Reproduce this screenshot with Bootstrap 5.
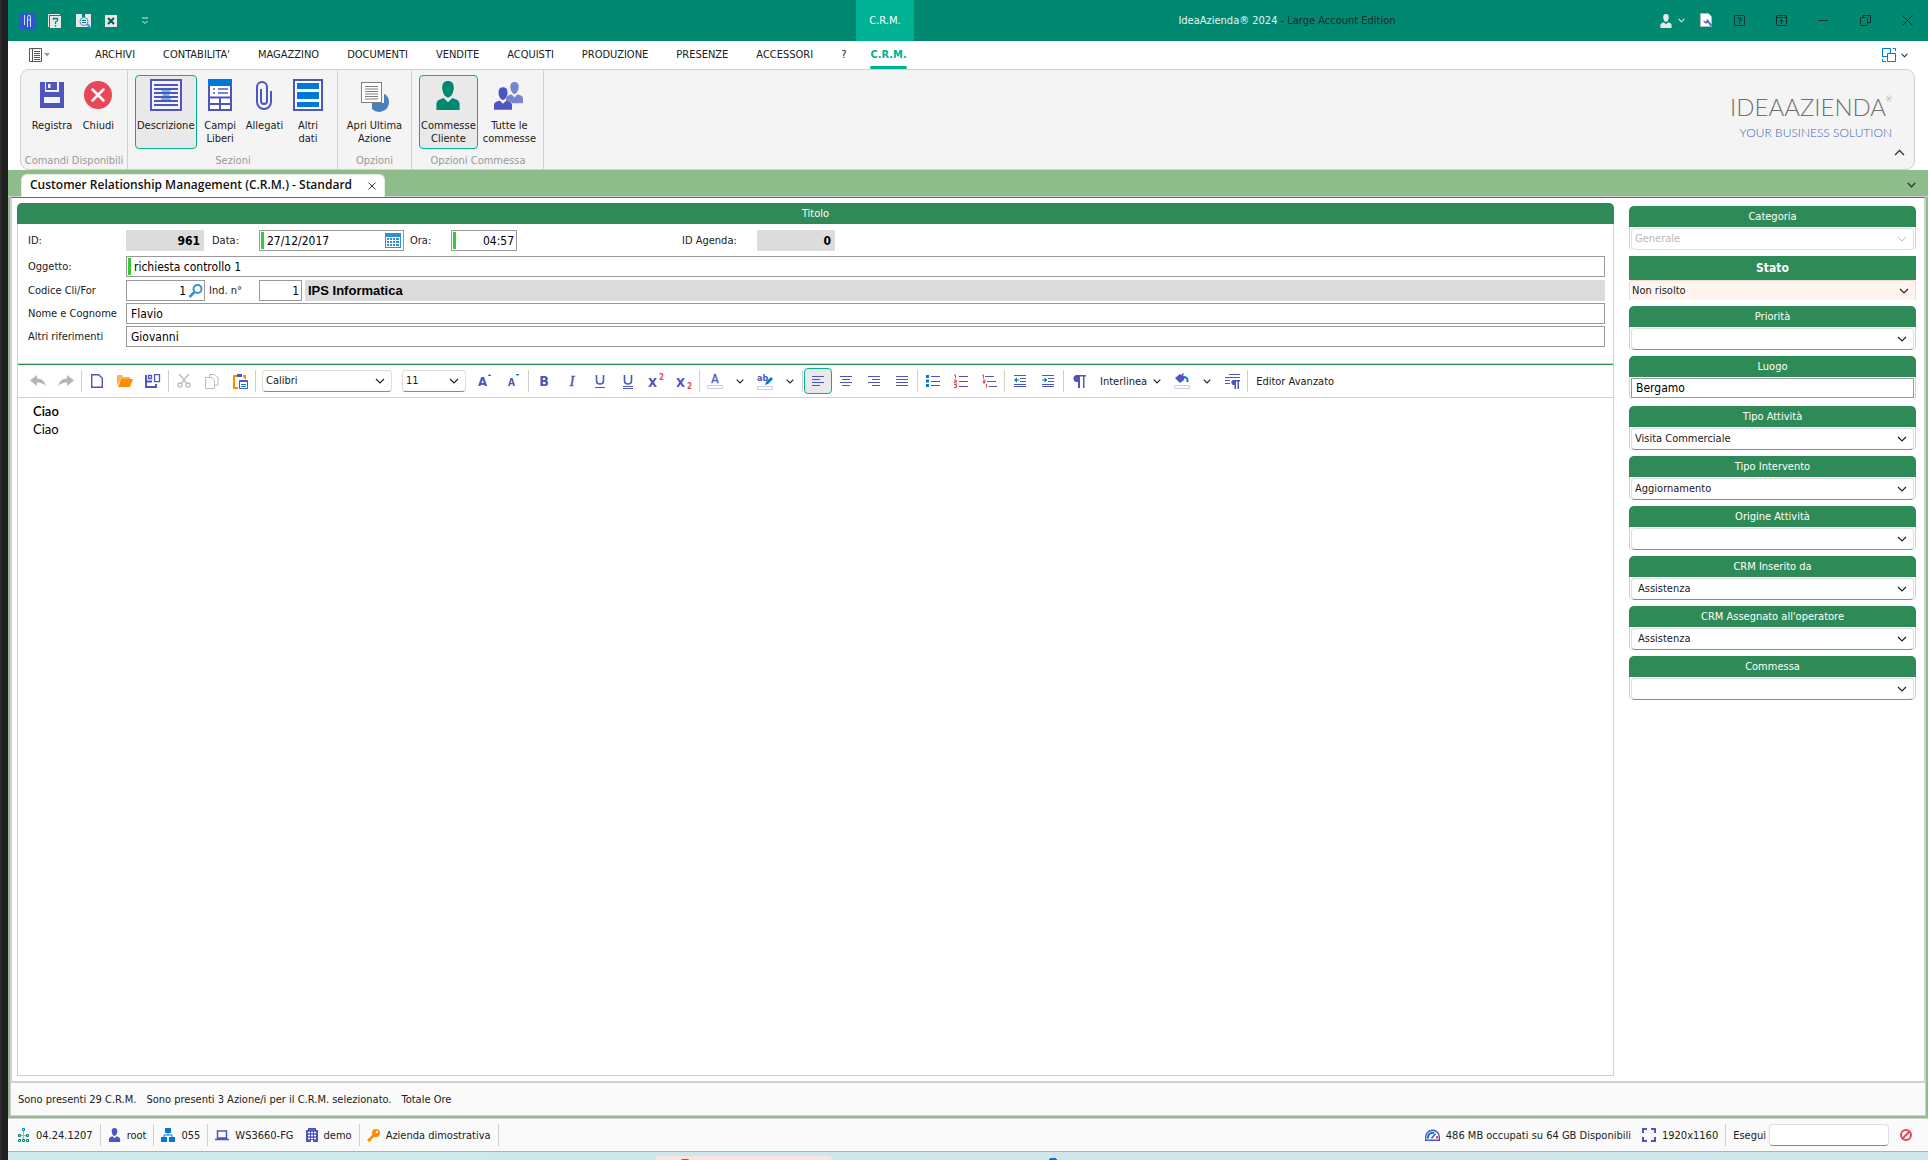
<!DOCTYPE html>
<html lang="it">
<head>
<meta charset="utf-8">
<meta name="viewport" content="width=device-width, initial-scale=1">
<title>IdeaAzienda 2024 - C.R.M.</title>
<link href="https://cdn.jsdelivr.net/npm/bootstrap@5.3.0/dist/css/bootstrap.min.css" rel="stylesheet">
<style>
:root{--teal:#008871;--teal-light:#00b294;--sea:#2e8b57;--sage:#8fbc8b;--line:#d0d0d0;--indigo:#4c55c0;--sky:#0078d7;--rose:#e84855}
body{font-family:"DejaVu Sans Condensed","DejaVu Sans",sans-serif;font-size:11px;line-height:13px;color:#202020;background:#1f1f1f}
button,input,select{font-family:inherit}
a{color:inherit;text-decoration:none}
.desk{min-height:100vh;padding-left:8px;background:linear-gradient(90deg,#2b2b2b 0 2px,#1f1f1f 2px 8px)}
.app-title{background:var(--teal);height:41px;color:#e6f5f2}
.quick{width:848px;padding-left:12px}
.ctx-tab{width:58px;background:var(--teal-light);color:#fff;padding-bottom:1px}
.cap-btn{border:0;background:none;padding:0;height:41px;width:42px;color:#1d2b28}
.bare{border:0;background:none;padding:0;color:inherit;line-height:inherit}
.app-menu{height:28px;background:#fff;padding:0 20px 0 21px}
.app-menu nav a{line-height:28px;position:relative}
.app-menu nav{gap:28px;margin-left:45px}
.app-menu nav a.current{color:var(--teal-light);font-weight:700;margin-left:-4px}
.app-menu nav a.current::after{content:"";position:absolute;left:0;right:0;bottom:0;height:3px;background:var(--teal-light);border-radius:2px}
.ribbon-wrap{background:#fff;padding:0 13px 0 12px}
.ribbon{height:101px;background:#f4f4f4;border:1px solid var(--line);border-radius:9px}
.rgroup{border-right:1px solid var(--line);padding:5px 6px 2px 7px}
.rgroup.narrow{padding-left:2px;padding-right:2px}
.rgroup .caption-text{color:#999;text-align:center;white-space:nowrap}
.rbtn{border:1px solid transparent;border-radius:4px;background:none;padding:3px 1px 0;height:74px;color:#202020;display:flex;flex-direction:column;align-items:center;text-align:center;line-height:13px}
.rbtn svg{margin-bottom:8px}
.rbtn.on{background:#e9e9e9;border-color:var(--teal-light)}
.brand-box{padding:20px 21px 0 0;font-family:Lato,sans-serif;font-weight:300}
.brand-top{font-size:24px;line-height:34px;color:#707070}
.brand-top sup{font-size:7px;top:-14px}
.brand-sub{font-size:12px;line-height:18px;color:#3f64b0}
.tabstrip{background:var(--sage);height:27px;padding:4px 12px 0 13px;border-bottom:1px solid var(--line)}
.doctab{background:#fff;border:1px solid #e4ece3;border-bottom:0;border-radius:6px 6px 0 0;height:23px;padding:0 8px;font-family:"Open Sans","Noto Sans",sans-serif;font-weight:600;font-size:12px;color:#111}
.doctab span{padding-bottom:2px}
.frame-outer{border:2px solid var(--sage);border-top:0;background:#fafafa}
.frame-in{border:2px solid var(--line);border-top:1px solid var(--sea);background:#fff;padding:5px 8px 5px 5px;gap:15px}
.main-col{border:1px solid var(--line);border-top:0;border-radius:6px 6px 0 0}
.bar-head{background:var(--sea);color:#fff;text-align:center;height:21px;line-height:21px;border-radius:5px 5px 0 0}
.fields{padding:6px 8px 16px 10px;border-bottom:1px solid var(--line);gap:2px}
.fields .frow{height:21px}
.fields .frow.first{margin-bottom:3px}
.fields .frow.subject{margin-bottom:1px}
.flab{width:98px}
.tbox{height:21px;border:1px solid #999;border-radius:0;background:#fff;color:#000;padding:0 4px;font-size:12px}
.ro{background:#dcdcdc;border:0;font-weight:700}
.firm{font-family:"Liberation Sans",sans-serif;font-size:13px;padding-left:3px}
.dirty{background:linear-gradient(#32cd32,#32cd32) 1px 1px/3px 17px no-repeat #fff;padding-left:7px}
.etool{border-top:1px solid var(--sea);border-bottom:1px solid var(--line);height:34px;padding-left:6px}
.ebtn{border:1px solid transparent;border-radius:4px;background:none;width:28px;height:26px;padding:0;display:flex;align-items:center;justify-content:center;color:#202020}
.ebtn.drop{width:22px}
.ebtn.wide{width:auto;padding:0 6px;font-size:11px}
.ebtn.on{border-color:var(--teal-light);background:#e9e9e9}
.sep{width:1px;height:22px;background:var(--line);margin:0 1px}
.pick{appearance:none;height:22px;border:1px solid #dedede;border-bottom-color:#8a8a8a;border-radius:4px;font-size:11px;line-height:20px;padding:0 24px 0 3px;color:#202020;background:#fff url("data:image/svg+xml,%3csvg xmlns='http://www.w3.org/2000/svg' viewBox='0 0 10 6'%3e%3cpath fill='none' stroke='%23222' stroke-width='1.200' d='m1 1 4 4 4-4'/%3e%3c/svg%3e") no-repeat right 6px center/10px 6px}
.pick:disabled{color:#b9b9b9;border-bottom-color:#dedede;background-color:#fff;opacity:1;background-image:url("data:image/svg+xml,%3csvg xmlns='http://www.w3.org/2000/svg' viewBox='0 0 10 6'%3e%3cpath fill='none' stroke='%23bbb' d='m1 1 4 4 4-4'/%3e%3c/svg%3e")}
.pick.alert-pick{background-color:#fff4ee;border-color:#f1d9d2;border-bottom:0;border-radius:3px 3px 0 0;height:20px;padding-left:2px}
.memo{color:#000;font-size:13px;line-height:18px;padding:4px 15px;font-family:Lato,sans-serif}
.side{width:287px;padding-top:3px;gap:6px}
.sbox{height:44px}
.sbody{border:1px solid var(--line);border-top:0;border-bottom:0;border-radius:0 0 4px 4px;height:23px;padding:1px 1px 0}
.sbody .tbox{height:20px}
.sbody .pick.indent{padding-left:6px}
.stato .bar-head{height:24px;line-height:24px;border-radius:0;font-weight:700;font-size:12px}
.notes{height:33px;padding:0 7px;border:1px solid var(--line);border-top:0;gap:10px}
.status{height:34px;background:#fafafa;border-top:1px solid var(--line);border-bottom:1px solid #a3b5b8;padding:0 16px 0 10px}
.status .sep{margin:0 7px}
.status .cell{display:flex;align-items:center;gap:6px}
.status .pick{background:#fff;width:120px;padding:0 4px}
.task{height:8px;background:linear-gradient(90deg,#cfe9ec,#cde8ea 35%,#d3e5ea 55%,#cfe6ec)}
.task-app{width:176px;height:4px;margin-left:648px;background:#fde2e2;border-radius:4px 4px 0 0}
svg{display:block;flex:none;overflow:visible}
</style>
<script src="https://cdn.jsdelivr.net/npm/bootstrap@5.3.0/dist/js/bootstrap.bundle.min.js" defer></script>
</head>
<body>
<svg width="0" height="0" class="position-absolute">
<symbol id="chev" viewBox="0 0 8 5"><path d="M.7.7 4 4 7.300.7" fill="none" stroke="currentColor" stroke-width="1.200"/></symbol>
<symbol id="person" viewBox="0 0 24 30"><path d="M12 0c4 0 6 2.500 6 7 0 5-3 10-6 10S6 12 6 7c0-4.500 2-7 6-7zM7.500 17.500 12 22l4.500-4.500C20 19 24 19.500 24 24v6H0v-6c0-4.500 4-5 7.500-6.500z" fill="currentColor"/></symbol>
<symbol id="lines" viewBox="0 0 12 11"><path d="M0 .5h12M0 3.500h12M0 6.500h12M0 9.500h12" stroke="#4c55c0" fill="none"/></symbol>
</svg>
<div class="desk d-flex flex-column">

<header class="app-title d-flex align-items-stretch">
  <div class="quick d-flex align-items-center">
    <svg width="16" height="16"><path fill="#2f55d4" d="M0 0h16v16H0z"/><path d="M4.500 2v10M7.500 14V5q0-3 1.500-3t1.500 3v9M7.500 7h3" stroke="#cfe0ff" fill="none"/></svg>
    <button class="bare" aria-label="Guida" style="margin-left:12px"><svg width="14" height="14"><path d="M.5 13V.5H12" stroke="#e8e8e8" fill="none"/><path fill="#e8e8e8" d="M2 2h11v12H2z"/><path d="M5.500 6V4.500h4v2L7.500 8v2M7.500 11v1.500" stroke="#008871" stroke-width="1.300" fill="none"/></svg></button>
    <button class="bare" aria-label="Cerca" style="margin-left:14px"><svg width="16" height="15"><path fill="#e8e8e8" d="M0 1h6v3h3V1h6v13H0z"/><path d="M7 0h2v3H7z" fill="#008871"/><circle cx="8" cy="8.500" r="4" fill="#dfeaf5" stroke="#5a8fc5"/><path d="M6 7.500h4M6 9.500h4" stroke="#008871"/><path d="m11 11 4 4" stroke="#5a8fc5" stroke-width="2"/></svg></button>
    <button class="bare" aria-label="Excel" style="margin-left:13px"><svg width="12" height="12"><path fill="#e8e8e8" d="M0 0h12v12H0z"/><path d="m3 3 6 6M9 3 3 9" stroke="#0a5c4c" stroke-width="2"/></svg></button>
    <button class="bare" aria-label="Personalizza" style="margin-left:24px"><svg width="8" height="8"><path d="M1 1h6M1.500 4 4 6.500 6.500 4" stroke="#e8e8e8" fill="none"/></svg></button>
  </div>
  <div class="ctx-tab d-flex align-items-center justify-content-center">C.R.M.</div>
  <div class="flex-grow-1 d-flex align-items-center justify-content-center"><span>IdeaAzienda® 2024 <span style="color:#1d2b28">- Large Account Edition</span></span></div>
  <div class="d-flex align-items-center">
    <button class="bare d-flex align-items-center" aria-label="Utente" style="gap:6px;margin-right:15px"><svg width="12" height="14" color="#e8e8e8"><use href="#person"/></svg><svg width="7" height="5" color="#e8e8e8"><use href="#chev"/></svg></button>
    <button class="bare" aria-label="Impostazioni" style="margin-right:6px"><svg width="12" height="15"><path fill="#fff" stroke="#b9b9b9" d="M.5.5h8l3 3v10H.500z"/><path d="m7 7 4.500 6" stroke="#3c78c8" stroke-width="2"/><path d="M3.500 7.500a2.500 2.500 0 1 0 4-1.500l-.5 2-2 .5z" fill="#3c78c8"/></svg></button>
    <button class="cap-btn d-flex align-items-center justify-content-center" aria-label="Aiuto"><svg width="11" height="11"><rect x=".5" y=".5" width="10" height="10" rx="1" fill="none" stroke="currentColor"/><path d="M4 4V3h3v2L5.500 6v1M5.500 8v1" stroke="currentColor" fill="none"/></svg></button>
    <button class="cap-btn d-flex align-items-center justify-content-center" aria-label="Blocca"><svg width="11" height="11"><rect x=".5" y=".5" width="10" height="10" rx="1" fill="none" stroke="currentColor"/><path d="M0 2.500h11M5.500 9V5M3.500 6.500l2-2 2 2" stroke="currentColor" fill="none"/></svg></button>
    <button class="cap-btn d-flex align-items-center justify-content-center" aria-label="Riduci"><svg width="10" height="11"><path d="M0 5.500h10" stroke="currentColor"/></svg></button>
    <button class="cap-btn d-flex align-items-center justify-content-center" aria-label="Ripristina"><svg width="11" height="11"><rect x=".5" y="2.500" width="7" height="8" rx="1" fill="none" stroke="currentColor"/><path d="M3 2V.5h7.500v7H8" stroke="currentColor" fill="none"/></svg></button>
    <button class="cap-btn d-flex align-items-center justify-content-center" aria-label="Chiudi finestra"><svg width="11" height="11"><path d="m.5.5 10 10M10.500.5l-10 10" stroke="currentColor"/></svg></button>
  </div>
</header>

<div class="app-menu d-flex align-items-center">
  <button class="bare d-flex align-items-center" aria-label="File" style="gap:2px"><svg width="13" height="14"><path d="M.5.5h12v13H.500zM3.500 1v13M5 3.500h6M5 5.500h6M5 7.500h6M5 9.500h6M5 11.500h6" stroke="#555" fill="none"/></svg><svg width="6" height="4"><path d="M0 0h6L3 3.500z" fill="#999"/></svg></button>
  <nav class="d-flex flex-grow-1">
    <a href="#">ARCHIVI</a><a href="#">CONTABILITA'</a><a href="#">MAGAZZINO</a><a href="#">DOCUMENTI</a><a href="#">VENDITE</a><a href="#">ACQUISTI</a><a href="#">PRODUZIONE</a><a href="#">PRESENZE</a><a href="#">ACCESSORI</a><a href="#">?</a><a href="#" class="current">C.R.M.</a>
  </nav>
  <button class="bare d-flex align-items-center" aria-label="Layout" style="gap:5px"><svg width="14" height="14"><path d="M4 8.500H.5v-8h8V5M11 .5h2.500V3M.5 11v2.500H4M5.500 5.500h8v8h-8zM0 8.500h5" stroke="#0078d7" fill="none"/></svg><svg width="7" height="5"><use href="#chev"/></svg></button>
</div>

<div class="ribbon-wrap">
<div class="ribbon d-flex">
  <section class="rgroup narrow d-flex flex-column justify-content-between" style="width:107px">
    <div class="d-flex justify-content-center" style="gap:6px;padding-right:2px">
      <button class="rbtn"><svg width="32" height="32"><path d="M4 3h5v10h14V3h5v26H4z" fill="#4c55c0"/><path d="M8 18h16v6H8z" fill="#f4f4f4"/><path d="M10 3h11v8H10z" fill="#4c55c0"/><path d="M12 5h2.500v4H12z" fill="#f4f4f4"/></svg>Registra</button>
      <button class="rbtn"><svg width="32" height="32"><circle cx="16" cy="16" r="14" fill="#e84855"/><path d="m10.500 10.500 11 11M21.500 10.500l-11 11" stroke="#fff" stroke-width="2.500" stroke-linecap="round"/></svg>Chiudi</button>
    </div>
    <div class="caption-text">Comandi Disponibili</div>
  </section>
  <section class="rgroup d-flex flex-column justify-content-between" style="width:210px">
    <div class="d-flex justify-content-between" style="padding-right:6px">
      <button class="rbtn on"><svg width="32" height="32"><rect x="1" y="1" width="30" height="30" fill="#f4f4f4" stroke="#4c55c0" stroke-width="2"/><path d="M10 9h12l-3 6 3 8H10l3-8z" fill="#74b3ea"/><path d="M4 6h24M4 10h24M4 14h24M4 18h24M4 22h24M4 26h24" stroke="#4c55c0" stroke-width="2"/></svg>Descrizione</button>
      <button class="rbtn"><svg width="24" height="32"><path d="M1 1h22v30H1z" fill="#fff" stroke="#4c55c0" stroke-width="2"/><path fill="#0078d7" d="M0 0h24v7H0z"/><path d="M5 10h2M10 10h10M5 14h2M10 14h10" stroke="#7a83d3" stroke-width="2"/><path d="M2 18.500h20M2 25h20M12 18v13" stroke="#4c55c0" stroke-width="2"/></svg>Campi<br>Liberi</button>
      <button class="rbtn"><svg width="16" height="32"><path d="M15 12v11a7 7 0 0 1-14 0V8a5 5 0 0 1 10 0v14a3 3 0 0 1-6 0V10" stroke="#4c55c0" stroke-width="2" fill="none"/></svg>Allegati</button>
      <button class="rbtn"><svg width="30" height="32"><rect x="1" y="1" width="28" height="30" fill="#fff" stroke="#4c55c0" stroke-width="2"/><path fill="#0078d7" d="M4 4h22v6H4zM4 13h22v7H4zM4 23h22v5H4z"/></svg>Altri<br>dati</button>
    </div>
    <div class="caption-text">Sezioni</div>
  </section>
  <section class="rgroup narrow d-flex flex-column justify-content-between" style="width:74px">
    <div class="d-flex justify-content-center">
      <button class="rbtn text-nowrap"><svg width="30" height="32"><path d="M12 30a10 10 0 0 0 17-7c0-4-2-7-5-8v9H12z" fill="#4a80bd"/><rect x="1.500" y="3.500" width="20" height="20" fill="#fff" stroke="#808080"/><path d="M5 7.500h13M5 10h13M5 12.500h13M5 15h13M5 17.500h13M5 20h13" stroke="#808080"/></svg>Apri Ultima<br>Azione</button>
    </div>
    <div class="caption-text">Opzioni</div>
  </section>
  <section class="rgroup d-flex flex-column justify-content-between" style="width:132px">
    <div class="d-flex" style="gap:3px">
      <button class="rbtn on"><svg width="32" height="32" color="#008871"><use href="#person" x="4" y="2" width="24" height="29"/></svg>Commesse<br>Cliente</button>
      <button class="rbtn text-nowrap"><svg width="32" height="32"><use href="#person" x="13" y="2" width="17" height="23" color="#7a83d3"/><use href="#person" x="0" y="7" width="20" height="25" color="#f4f4f4"/><use href="#person" x="1" y="8" width="18" height="23" color="#4c55c0"/></svg>Tutte le<br>commesse</button>
    </div>
    <div class="caption-text">Opzioni Commessa</div>
  </section>
  <div class="ms-auto d-flex">
    <div class="brand-box text-end"><div class="brand-top">IDEAAZIENDA<sup>®</sup></div><div class="brand-sub">YOUR BUSINESS SOLUTION</div></div>
  </div>
  <button class="bare align-self-end" aria-label="Comprimi barra" style="margin:0 9px 13px -19px"><svg width="11" height="7"><path d="m1 6 4.500-4.500L10 6" stroke="#333" stroke-width="1.300" fill="none"/></svg></button>
</div>
</div>

<div class="tabstrip d-flex align-items-center">
  <div class="doctab d-flex align-items-center gap-3"><span>Customer Relationship Management (C.R.M.) - Standard</span><button class="bare" aria-label="Chiudi scheda"><svg width="8" height="8"><path d="m.5.5 7 7M7.500.5l-7 7" stroke="#333"/></svg></button></div>
  <button class="bare ms-auto" aria-label="Elenco schede"><svg width="9" height="6" color="#333"><use href="#chev"/></svg></button>
</div>

<div class="frame-outer flex-grow-1 d-flex flex-column">
<main class="frame-in flex-grow-1 d-flex">
  <section class="main-col flex-grow-1 d-flex flex-column">
    <div class="bar-head" style="margin:0 -1px">Titolo</div>
    <form class="fields d-flex flex-column">
      <div class="frow first d-flex align-items-center">
        <label class="flab" for="f-id">ID:</label><input id="f-id" class="tbox ro text-end" style="width:78px" value="961" readonly>
        <label for="f-data" style="width:55px;padding-left:8px">Data:</label>
        <div class="position-relative"><input id="f-data" class="tbox dirty" style="width:145px" value="27/12/2017"><svg class="position-absolute" style="right:3px;top:3px" width="16" height="15"><path fill="#2f8fd0" d="M0 0h16v15H0z"/><path d="M1 4.500h14M1 7.500h14M1 10.500h14M1 13.500h14M1.500 4v10M4.500 4v10M7.500 4v10M10.500 4v10M14.500 4v10" stroke="#fff"/></svg></div>
        <label for="f-ora" style="width:47px;padding-left:6px">Ora:</label><input id="f-ora" class="tbox dirty text-end" style="width:66px;padding-right:2px" value="04:57">
        <label for="f-ag" style="width:240px;padding-left:165px">ID Agenda:</label><input id="f-ag" class="tbox ro text-end" style="width:78px" value="0" readonly>
      </div>
      <div class="frow subject d-flex align-items-center"><label class="flab" for="f-ogg">Oggetto:</label><input id="f-ogg" class="tbox dirty flex-grow-1" value="richiesta controllo 1"></div>
      <div class="frow d-flex align-items-center">
        <label class="flab" for="f-cod">Codice Cli/For</label><div class="position-relative"><input id="f-cod" class="tbox text-end" style="width:79px;padding-right:18px" value="1"><svg class="position-absolute" style="right:2px;top:4px" width="14" height="14"><circle cx="8.500" cy="5" r="4" stroke="#3a92cf" stroke-width="2" fill="none"/><path d="m5.500 8-5 5" stroke="#3a92cf" stroke-width="2.500"/></svg></div>
        <label for="f-ind" style="width:54px;padding-left:4px">Ind. n°</label><input id="f-ind" class="tbox text-end" style="width:43px;padding-right:2px" value="1">
        <input class="tbox ro firm flex-grow-1" style="margin-left:3px" aria-label="Ragione sociale" value="IPS Informatica" readonly>
      </div>
      <div class="frow d-flex align-items-center"><label class="flab" for="f-nome">Nome e Cognome</label><input id="f-nome" class="tbox flex-grow-1" value="Flavio"></div>
      <div class="frow d-flex align-items-center"><label class="flab" for="f-alt">Altri riferimenti</label><input id="f-alt" class="tbox flex-grow-1" value="Giovanni"></div>
    </form>
    <div class="etool d-flex align-items-center">
      <button class="ebtn" aria-label="Annulla"><svg width="16" height="12"><path d="M0 5.500 7 0v3.500c5 0 8 3 9 8-2-3-5-4-9-4V11z" fill="#b5b5b5"/></svg></button>
      <button class="ebtn" aria-label="Ripeti"><svg width="16" height="12"><path d="M16 5.500 9 0v3.500c-5 0-8 3-9 8 2-3 5-4 9-4V11z" fill="#b5b5b5"/></svg></button>
      <span class="sep"></span>
      <button class="ebtn" aria-label="Nuovo"><svg width="12" height="14"><path d="M.7.7h7l3.600 3.500v9H.7z" fill="none" stroke="#4c55c0" stroke-width="1.400"/></svg></button>
      <button class="ebtn" aria-label="Apri"><svg width="16" height="12"><path d="M0 11V0h5l1 2h7v2H4z" fill="#ffb347"/><path d="M4 4h12l-3 8H1z" fill="#ff8c00"/></svg></button>
      <button class="ebtn" aria-label="Salva"><svg width="16" height="14"><path d="M1 1v12h10v-3M1 7.500h6" stroke="#4c55c0" stroke-width="2" fill="none"/><path d="M3.500 1.500h3v3h-3zM9.500.7h5v7h-5z" stroke="#4c55c0" stroke-width="1.300" fill="none"/></svg></button>
      <span class="sep"></span>
      <button class="ebtn" aria-label="Taglia"><svg width="14" height="14" fill="none" stroke="#bbb" stroke-width="1.300"><path d="m2 0 7.500 9M12 0 4.500 9"/><circle cx="3" cy="11" r="2"/><circle cx="11" cy="11" r="2"/></svg></button>
      <button class="ebtn" aria-label="Copia"><svg width="14" height="15" fill="none" stroke="#bbb"><path d="M4.500 3V.5h5l3.500 3V11h-3M.500 3.500h6l3 3v8h-9z"/></svg></button>
      <button class="ebtn" aria-label="Incolla"><svg width="15" height="15"><path d="M4 2H1v12h4M10 2h2v3" stroke="#ff8c00" stroke-width="2" fill="none"/><path d="M4 0h5v3H4z" fill="#4c55c0"/><path d="M6.500 6.500h8v8h-8z" fill="#fff" stroke="#4c55c0"/><path d="M6 7.500h8M8 10.500h5M8 12.500h5" stroke="#0078d7"/></svg></button>
      <span class="sep"></span>
      <select class="pick" aria-label="Carattere" style="width:130px;margin:0 10px 0 5px"><option>Calibri</option></select>
      <select class="pick" aria-label="Dimensione" style="width:64px;margin-right:5px"><option>11</option></select>
      <button class="ebtn" aria-label="Ingrandisci"><svg width="16" height="16"><text x="1" y="13" font-size="13" font-weight="700" fill="#4c55c0">A</text><path d="m10.500 3 2-2 2 2z" fill="#0078d7"/></svg></button>
      <button class="ebtn" aria-label="Rimpicciolisci"><svg width="16" height="16"><text x="3" y="13" font-size="10" font-weight="700" fill="#4c55c0">A</text><path d="m10.500 1 2 2 2-2z" fill="#0078d7"/></svg></button>
      <span class="sep"></span>
      <button class="ebtn" aria-label="Grassetto"><svg width="14" height="16"><text x="7" y="13" text-anchor="middle" font-size="14" font-weight="700" fill="#4c55c0">B</text></svg></button>
      <button class="ebtn" aria-label="Corsivo"><svg width="14" height="16"><text x="7" y="13" text-anchor="middle" font-size="15" font-style="italic" font-family="Liberation Serif" stroke="#4c55c0" stroke-width=".4" fill="#4c55c0">I</text></svg></button>
      <button class="ebtn" aria-label="Sottolineato"><svg width="14" height="16"><path d="M3.500 2v5.500q0 3.500 3.500 3.500t3.500-3.500V2" stroke="#4c55c0" stroke-width="1.600" fill="none"/><path d="M2 14.500h10" stroke="#4c55c0"/></svg></button>
      <button class="ebtn" aria-label="Doppia sottolineatura"><svg width="14" height="16"><path d="M3.500 2v5.500q0 3.500 3.500 3.500t3.500-3.500V2" stroke="#4c55c0" stroke-width="1.600" fill="none"/><path d="M2 13.500h10M2 15.500h10" stroke="#4c55c0"/></svg></button>
      <button class="ebtn" aria-label="Apice"><svg width="17" height="18"><text x="0" y="15" font-size="13" font-weight="700" fill="#4c55c0">X</text><text x="11" y="8" font-size="8" font-weight="700" fill="#e84855">2</text></svg></button>
      <button class="ebtn" aria-label="Pedice"><svg width="17" height="18"><text x="0" y="15" font-size="13" font-weight="700" fill="#4c55c0">X</text><text x="11" y="17" font-size="8" font-weight="700" fill="#e84855">2</text></svg></button>
      <span class="sep"></span>
      <button class="ebtn" aria-label="Colore testo"><svg width="16" height="16"><text x="8" y="10" text-anchor="middle" font-size="12" fill="#4c55c0" stroke="#4c55c0" stroke-width=".3">A</text><path d="M.5 12.500h15v3H.500z" fill="none" stroke="#c9cdf0"/></svg></button>
      <button class="ebtn drop" aria-label="Scegli colore testo"><svg width="8" height="5"><use href="#chev"/></svg></button>
      <button class="ebtn" aria-label="Evidenzia"><svg width="16" height="17"><text x="0" y="8" font-size="9" font-weight="700" fill="#4c55c0">ab</text><path d="m8 12 1-3 5-5 2 2-5 5z" fill="#0078d7"/><path d="M.5 13.500h15v3H.500z" fill="none" stroke="#c9cdf0"/></svg></button>
      <button class="ebtn drop" aria-label="Scegli evidenziatore"><svg width="8" height="5"><use href="#chev"/></svg></button>
      <span class="sep"></span>
      <button class="ebtn on" aria-label="Allinea a sinistra"><svg width="12" height="10"><path d="M0 .5h12M0 3.500h8M0 6.500h12M0 9.500h8" stroke="#4c55c0"/></svg></button>
      <button class="ebtn" aria-label="Centra"><svg width="12" height="10"><path d="M0 .5h12M2 3.500h8M0 6.500h12M2 9.500h8" stroke="#4c55c0"/></svg></button>
      <button class="ebtn" aria-label="Allinea a destra"><svg width="12" height="10"><path d="M0 .5h12M4 3.500h8M0 6.500h12M4 9.500h8" stroke="#4c55c0"/></svg></button>
      <button class="ebtn" aria-label="Giustifica"><svg width="12" height="10"><use href="#lines" width="12" height="11"/></svg></button>
      <span class="sep"></span>
      <button class="ebtn" aria-label="Elenco puntato"><svg width="14" height="12"><path d="M5 1.500h9M5 6.500h9M5 10.500h9" stroke="#4c55c0"/><path d="M0 0h3v3H0zM0 4.500h3v3H0zM0 9h3v3H0z" fill="#0078d7"/></svg></button>
      <button class="ebtn" aria-label="Elenco numerato"><svg width="14" height="14"><path d="M5 2.500h9M5 7.500h9M5 12.500h9" stroke="#4c55c0"/><path d="M0 1h1.500v3.500M0 6h2.500v1.500H.5V9H3M0 10.500h2.500v3H0M1 12h1.500" stroke="#e84855" fill="none"/></svg></button>
      <button class="ebtn" aria-label="Elenco a livelli"><svg width="15" height="14"><path d="M3 2.500h9M5 7.500h9M7 12.500h8" stroke="#4c55c0"/><path d="M0 1h1.500v3.500M1 6h2v3H1V7.500h2M4.500 10v3.500" stroke="#e84855" fill="none"/></svg></button>
      <span class="sep"></span>
      <button class="ebtn" aria-label="Riduci rientro"><svg width="12" height="12"><path d="M0 .5h12M6 3.500h6M6 6.500h6M0 9.500h12M0 11.500h12" stroke="#4c55c0"/><path d="m0 5 3-2.500V4.500h2.500v1H3v2z" fill="#0078d7"/></svg></button>
      <button class="ebtn" aria-label="Aumenta rientro"><svg width="12" height="12"><path d="M0 .5h12M6 3.500h6M6 6.500h6M0 9.500h12M0 11.500h12" stroke="#4c55c0"/><path d="m5.500 5-3-2.500V4.500H0v1h2.500v2z" fill="#0078d7"/></svg></button>
      <span class="sep"></span>
      <button class="ebtn" aria-label="Mostra paragrafi"><svg width="14" height="13"><path d="M5 7a3.500 3.500 0 0 1 0-7h9v1.500h-1.500V13H11V1.500H8V13H6V7z" fill="#4c55c0"/></svg></button>
      <button class="ebtn wide" style="gap:6px"><span>Interlinea</span><svg width="8" height="5"><use href="#chev"/></svg></button>
      <button class="ebtn" aria-label="Riempimento"><svg width="16" height="16"><path d="m1 5 5-4 1.500 1L9 0l1 1-1 1.500L11 4l-1 3-4 3z" fill="#4c55c0"/><path d="M10 4q4 0 3.500 5" stroke="#0078d7" stroke-width="2" fill="none"/><path d="M.5 12.500h15v3H.500z" fill="none" stroke="#c9cdf0"/></svg></button>
      <button class="ebtn drop" aria-label="Scegli riempimento"><svg width="8" height="5"><use href="#chev"/></svg></button>
      <button class="ebtn" aria-label="Paragrafo"><svg width="15" height="15"><path d="M4 .5h11M0 3.500h15M0 6.500h5M0 9.500h5" stroke="#4c55c0"/><path d="M8 11a2.700 2.700 0 0 1 0-5h7v1.500h-1V15h-1.500V7.500H11V15H9.500v-4z" fill="#4c55c0"/></svg></button>
      <span class="sep"></span>
      <button class="ebtn wide text-nowrap">Editor Avanzato</button>
    </div>
    <div class="memo flex-grow-1"><strong class="fw-semibold">Ciao</strong><br>Ciao</div>
  </section>

  <aside class="side flex-shrink-0 d-flex flex-column">
    <div class="sbox"><label class="bar-head d-block" for="s1">Categoria</label><div class="sbody"><select id="s1" class="pick w-100" disabled><option>Generale</option></select></div></div>
    <div class="sbox stato"><label class="bar-head d-block" for="s2">Stato</label><select id="s2" class="pick alert-pick w-100 d-block"><option>Non risolto</option></select></div>
    <div class="sbox"><label class="bar-head d-block" for="s3">Priorità</label><div class="sbody"><select id="s3" class="pick w-100"><option></option></select></div></div>
    <div class="sbox"><label class="bar-head d-block" for="s4">Luogo</label><div class="sbody"><input id="s4" class="tbox w-100 d-block" value="Bergamo"></div></div>
    <div class="sbox"><label class="bar-head d-block" for="s5">Tipo Attività</label><div class="sbody"><select id="s5" class="pick w-100"><option>Visita Commerciale</option></select></div></div>
    <div class="sbox"><label class="bar-head d-block" for="s6">Tipo Intervento</label><div class="sbody"><select id="s6" class="pick w-100"><option>Aggiornamento</option></select></div></div>
    <div class="sbox"><label class="bar-head d-block" for="s7">Origine Attività</label><div class="sbody"><select id="s7" class="pick w-100"><option></option></select></div></div>
    <div class="sbox"><label class="bar-head d-block" for="s8">CRM Inserito da</label><div class="sbody"><select id="s8" class="pick indent w-100"><option>Assistenza</option></select></div></div>
    <div class="sbox"><label class="bar-head d-block" for="s9">CRM Assegnato all'operatore</label><div class="sbody"><select id="s9" class="pick indent w-100"><option>Assistenza</option></select></div></div>
    <div class="sbox"><label class="bar-head d-block" for="s10">Commessa</label><div class="sbody"><select id="s10" class="pick w-100"><option></option></select></div></div>
  </aside>
</main>
<div class="notes d-flex align-items-center"><span>Sono presenti 29 C.R.M.</span><span>Sono presenti 3 Azione/i per il C.R.M. selezionato.</span><span>Totale Ore</span></div>
</div>

<footer class="status d-flex align-items-center">
  <span class="cell"><svg width="12" height="14"><path d="M5.500 3v9M1.500 9v-1.500h8V9" stroke="#a6a9e0" fill="none"/><path d="M4.500.5h2v2h-2z" fill="none" stroke="#0078d7"/><path d="M.5 6.500h2v2h-2zM8.500 6.500h2v2h-2zM.5 11.500h2v2h-2zM4.500 11.500h2v2h-2zM8.500 11.500h2v2h-2z" fill="none" stroke="#008871"/></svg>04.24.1207</span><span class="sep"></span>
  <span class="cell"><svg width="13" height="14" color="#4c55c0"><use href="#person"/></svg>root</span><span class="sep"></span>
  <span class="cell"><svg width="14" height="14"><path d="M4 0h6v5H4zM0 9h6v5H0zM8 9h6v5H8z" fill="#0078d7"/><path d="M7 5v2M3 9V7h8v2" stroke="#0078d7" fill="none"/></svg>055</span><span class="sep"></span>
  <span class="cell"><svg width="14" height="11"><path d="M2.500 1h9v7h-9zM0 9.500h14" stroke="#4c55c0" stroke-width="1.500" fill="none"/></svg>WS3660-FG</span>
  <span class="cell" style="margin-left:12px"><svg width="12" height="14"><path d="M2 0h8v2h2v12H7v-2H5v2H0V2h2z" fill="#4c55c0"/><path d="M2 4.500h8M2 7.500h8M2 10.500h8" stroke="#fff" stroke-width="1.500" stroke-dasharray="2 1"/></svg>demo</span><span class="sep"></span>
  <span class="cell"><svg width="13" height="13"><path d="m1 12 6-6" stroke="#ff8c00" stroke-width="2.500"/><path d="m2 10 2 2" stroke="#ff8c00" stroke-width="1.500"/><circle cx="9" cy="4" r="4" fill="#ff8c00"/><circle cx="10" cy="3" r="1.200" fill="#fff"/></svg>Azienda dimostrativa</span><span class="sep"></span>
  <span class="cell ms-auto"><svg width="15" height="12"><path d="M.7 11V8a6.800 6.800 0 0 1 13.600 0v3.200H.7z" fill="#fff" stroke="#4c55c0" stroke-width="1.400"/><path d="M3 9.500V8a4.500 4.500 0 0 1 6-4" stroke="#0078d7" stroke-width="2" fill="none"/><path d="M12 9.500V7" stroke="#e84855" stroke-width="2"/><path d="m6.500 9.500 4-5" stroke="#4c55c0" stroke-width="1.500"/></svg>486 MB occupati su 64 GB Disponibili</span>
  <span class="cell" style="margin-left:11px"><svg width="14" height="14"><path d="M1 5V1h4M9 1h4v4M13 9v4H9M5 13H1V9" stroke="#4c55c0" stroke-width="2" fill="none"/></svg>1920x1160</span><span class="sep"></span>
  <label for="run" style="margin-right:3px">Esegui</label><input id="run" class="pick">
  <button class="bare" aria-label="Annulla comando" style="margin-left:11px"><svg width="12" height="12"><circle cx="6" cy="6" r="5" fill="none" stroke="#e84855" stroke-width="2"/><path d="m9.500 2.500-7 7" stroke="#e84855" stroke-width="2"/></svg></button>
</footer>
<div class="task d-flex align-items-end overflow-hidden"><div class="task-app overflow-hidden"><svg width="176" height="4"><ellipse cx="29" cy="4" rx="4" ry="1" fill="#c0392b"/></svg></div><svg width="8" height="2" style="margin-left:217px"><path fill="#1e6ab8" d="M1 0h6v1h1v1H0V1h1z"/></svg></div>
</div>
</body>
</html>
